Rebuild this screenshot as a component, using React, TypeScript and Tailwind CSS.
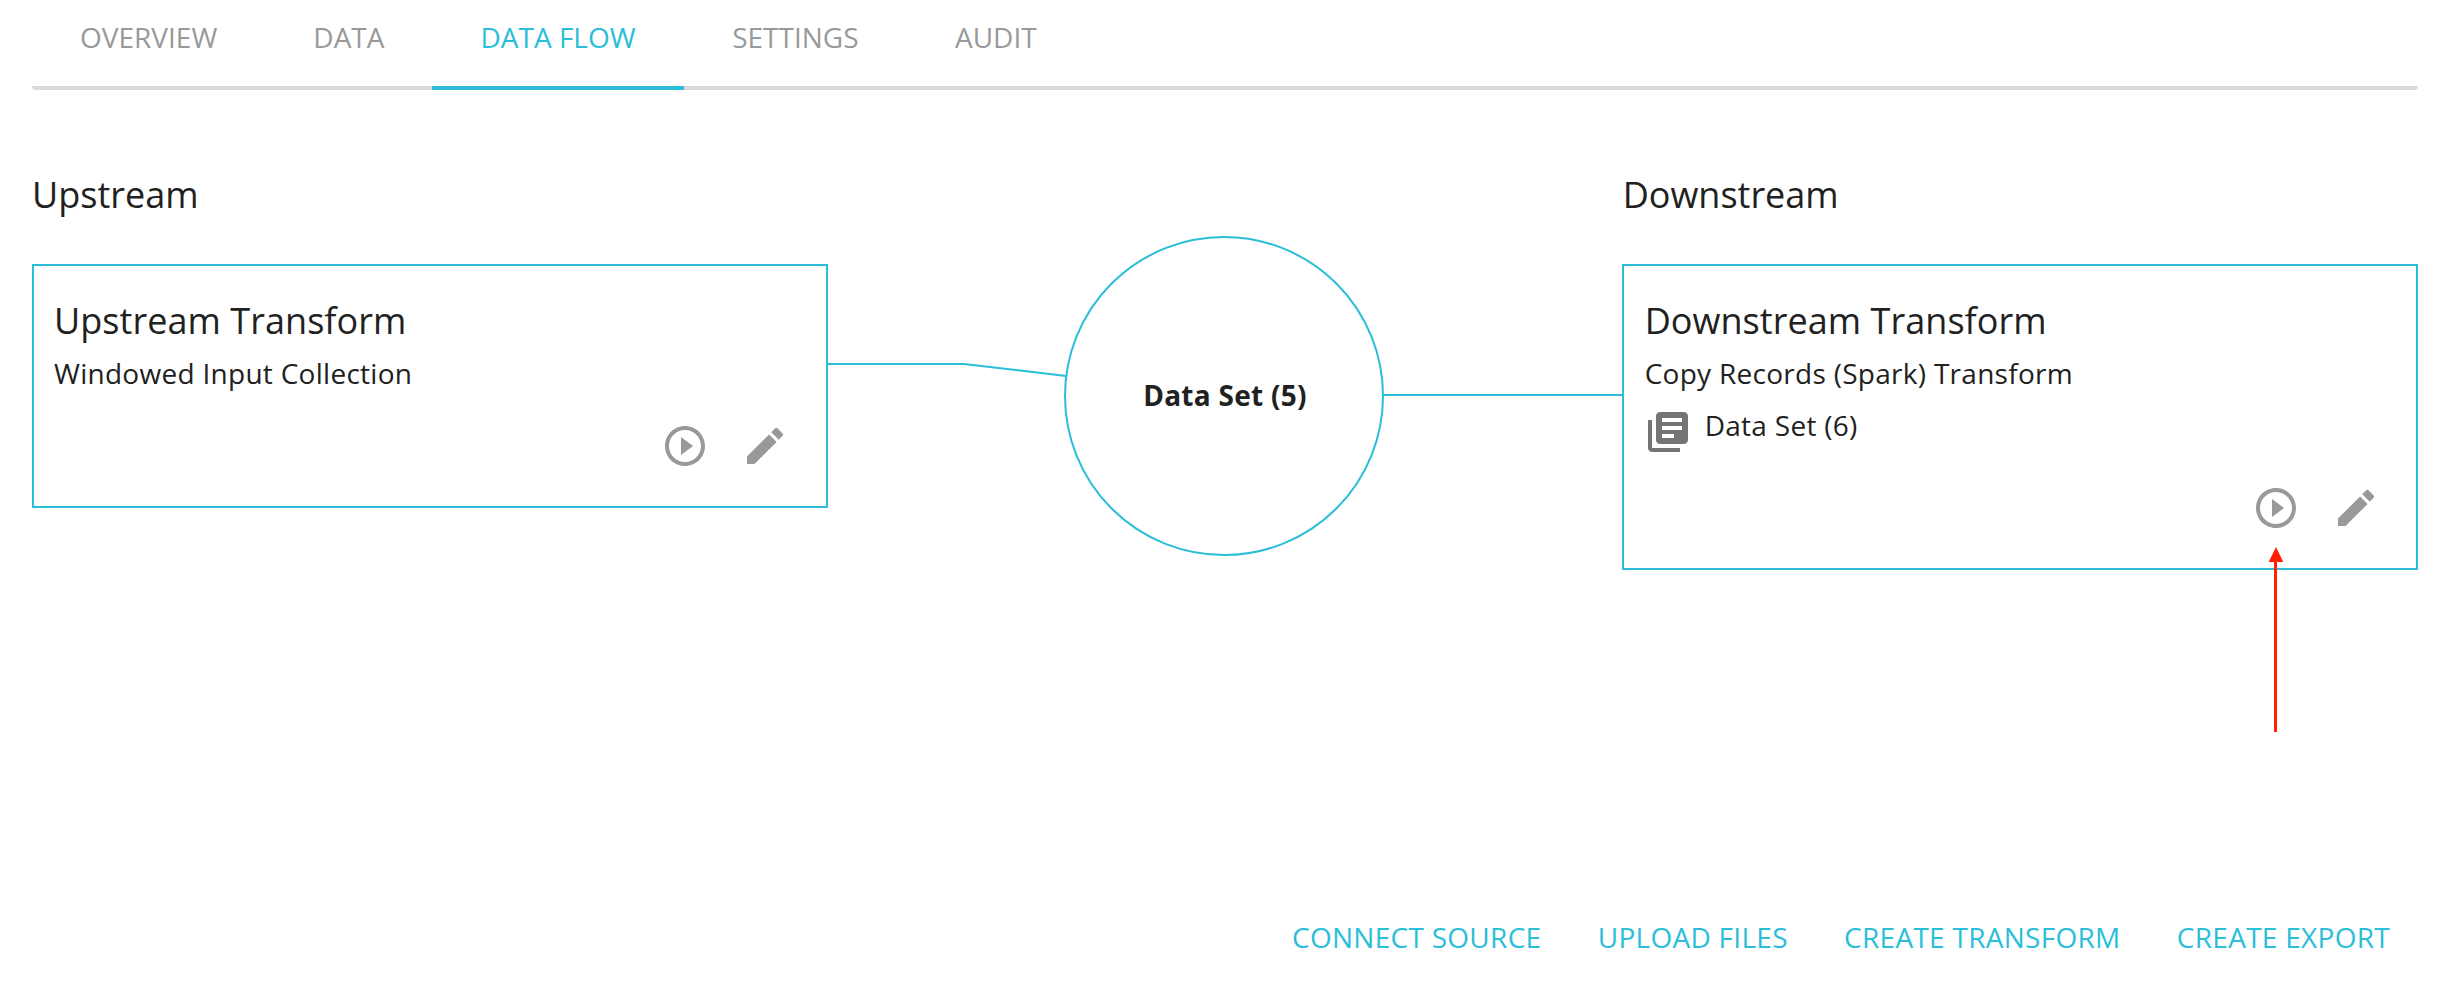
import { MdEdit, MdLibraryBooks, MdPlayCircleOutline } from "react-icons/md";
import clsx from "clsx";
import type { ReactNode } from "react";

const tabs = ["OVERVIEW", "DATA", "DATA FLOW", "SETTINGS", "AUDIT"];
const actions = ["CONNECT SOURCE", "UPLOAD FILES", "CREATE TRANSFORM", "CREATE EXPORT"];

function TabBar({ active }: { active: string }) {
  return (
    <nav className="relative flex h-[90px]">
      <div className="absolute inset-x-0 bottom-0 h-1 rounded-b bg-[#dadada]" />
      {tabs.map((tab) => (
        <button
          key={tab}
          className={clsx(
            "relative border-b-4 pr-12 pl-[48.04px] pt-[17px] pb-[29px] text-[28px] leading-10 nth-[n+5]:pl-[48.5px]",
            tab === active ? "border-[#2abed9] text-[#2abed9]" : "border-transparent text-[#999999]",
          )}
        >
          {tab}
        </button>
      ))}
    </nav>
  );
}

function TransformCard({ title, kind, className, children }: {
  title: string;
  kind: string;
  className: string;
  children?: ReactNode;
}) {
  return (
    <article className={clsx("flex flex-col border-2 border-[#2abed9] pt-[31px] pb-9", className)}>
      <h3 className="text-[36px] leading-[48px] tracking-[0.05px]">{title}</h3>
      <p className="mt-2 text-[28px] leading-10 tracking-[0.01em]">{kind}</p>
      {children}
      <div className="mt-auto mr-4 flex justify-end gap-8 text-[#999999]">
        <MdPlayCircleOutline size={48} />
        <MdEdit size={48} />
      </div>
    </article>
  );
}

export default function App() {
  return (
    <div className="flex h-[994px] w-[2462px] flex-col bg-white pr-11 pl-8 font-['Open_Sans',sans-serif] text-[#212121]">
      <TabBar active="DATA FLOW" />
      <main className="relative mt-[81px] flex">
        <section className="w-[796px] shrink-0">
          <h2 className="mb-[45px] text-[36px] leading-[48px]">Upstream</h2>
          <TransformCard
            title="Upstream Transform"
            kind="Windowed Input Collection"
            className="h-[244px] pr-[20.67px] pl-5"
          />
        </section>

        <section className="relative w-[794px] shrink-0">
          <svg className="absolute top-0 left-0" width="794" height="400" fill="none" stroke="#2abed9" strokeWidth="2">
            <path d="M0 193H136L238 205" />
            <path d="M555 224H794" />
          </svg>
          <div className="absolute top-[65px] left-[236px] flex size-80 items-center justify-center rounded-full border-2 border-[#2abed9] pb-[2px] pl-[2px] text-[28px] leading-10 font-bold tracking-[0.01em]">
            Data Set (5)
          </div>
        </section>

        <section className="w-[796px] shrink-0">
          <h2 className="mb-[45px] pl-[0.67px] text-[36px] leading-[48px]">Downstream</h2>
          <TransformCard
            title="Downstream Transform"
            kind="Copy Records (Spark) Transform"
            className="h-[306px] pr-5 pl-[20.67px]"
          >
            <div className="mt-3 -ml-[0.4px] flex gap-[12.4px] text-[28px] leading-10 tracking-[0.01em]">
              <MdLibraryBooks size={48} className="mt-[3px] text-[#757575]" />
              <span>Data Set (6)</span>
            </div>
          </TransformCard>
        </section>

        <svg className="absolute top-[376px] left-[2236px]" width="16" height="186" fill="#ff2000">
          <path d="M8 0L15.3 15H9V185H6V15H0.7Z" />
        </svg>
      </main>

      <footer className="mt-auto mb-[37px] flex justify-end gap-[56.3px] pr-7 text-[28px] leading-10 tracking-[0.01em] text-[#2abed9]">
        {actions.map((label) => (
          <button key={label}>{label}</button>
        ))}
      </footer>
    </div>
  );
}
